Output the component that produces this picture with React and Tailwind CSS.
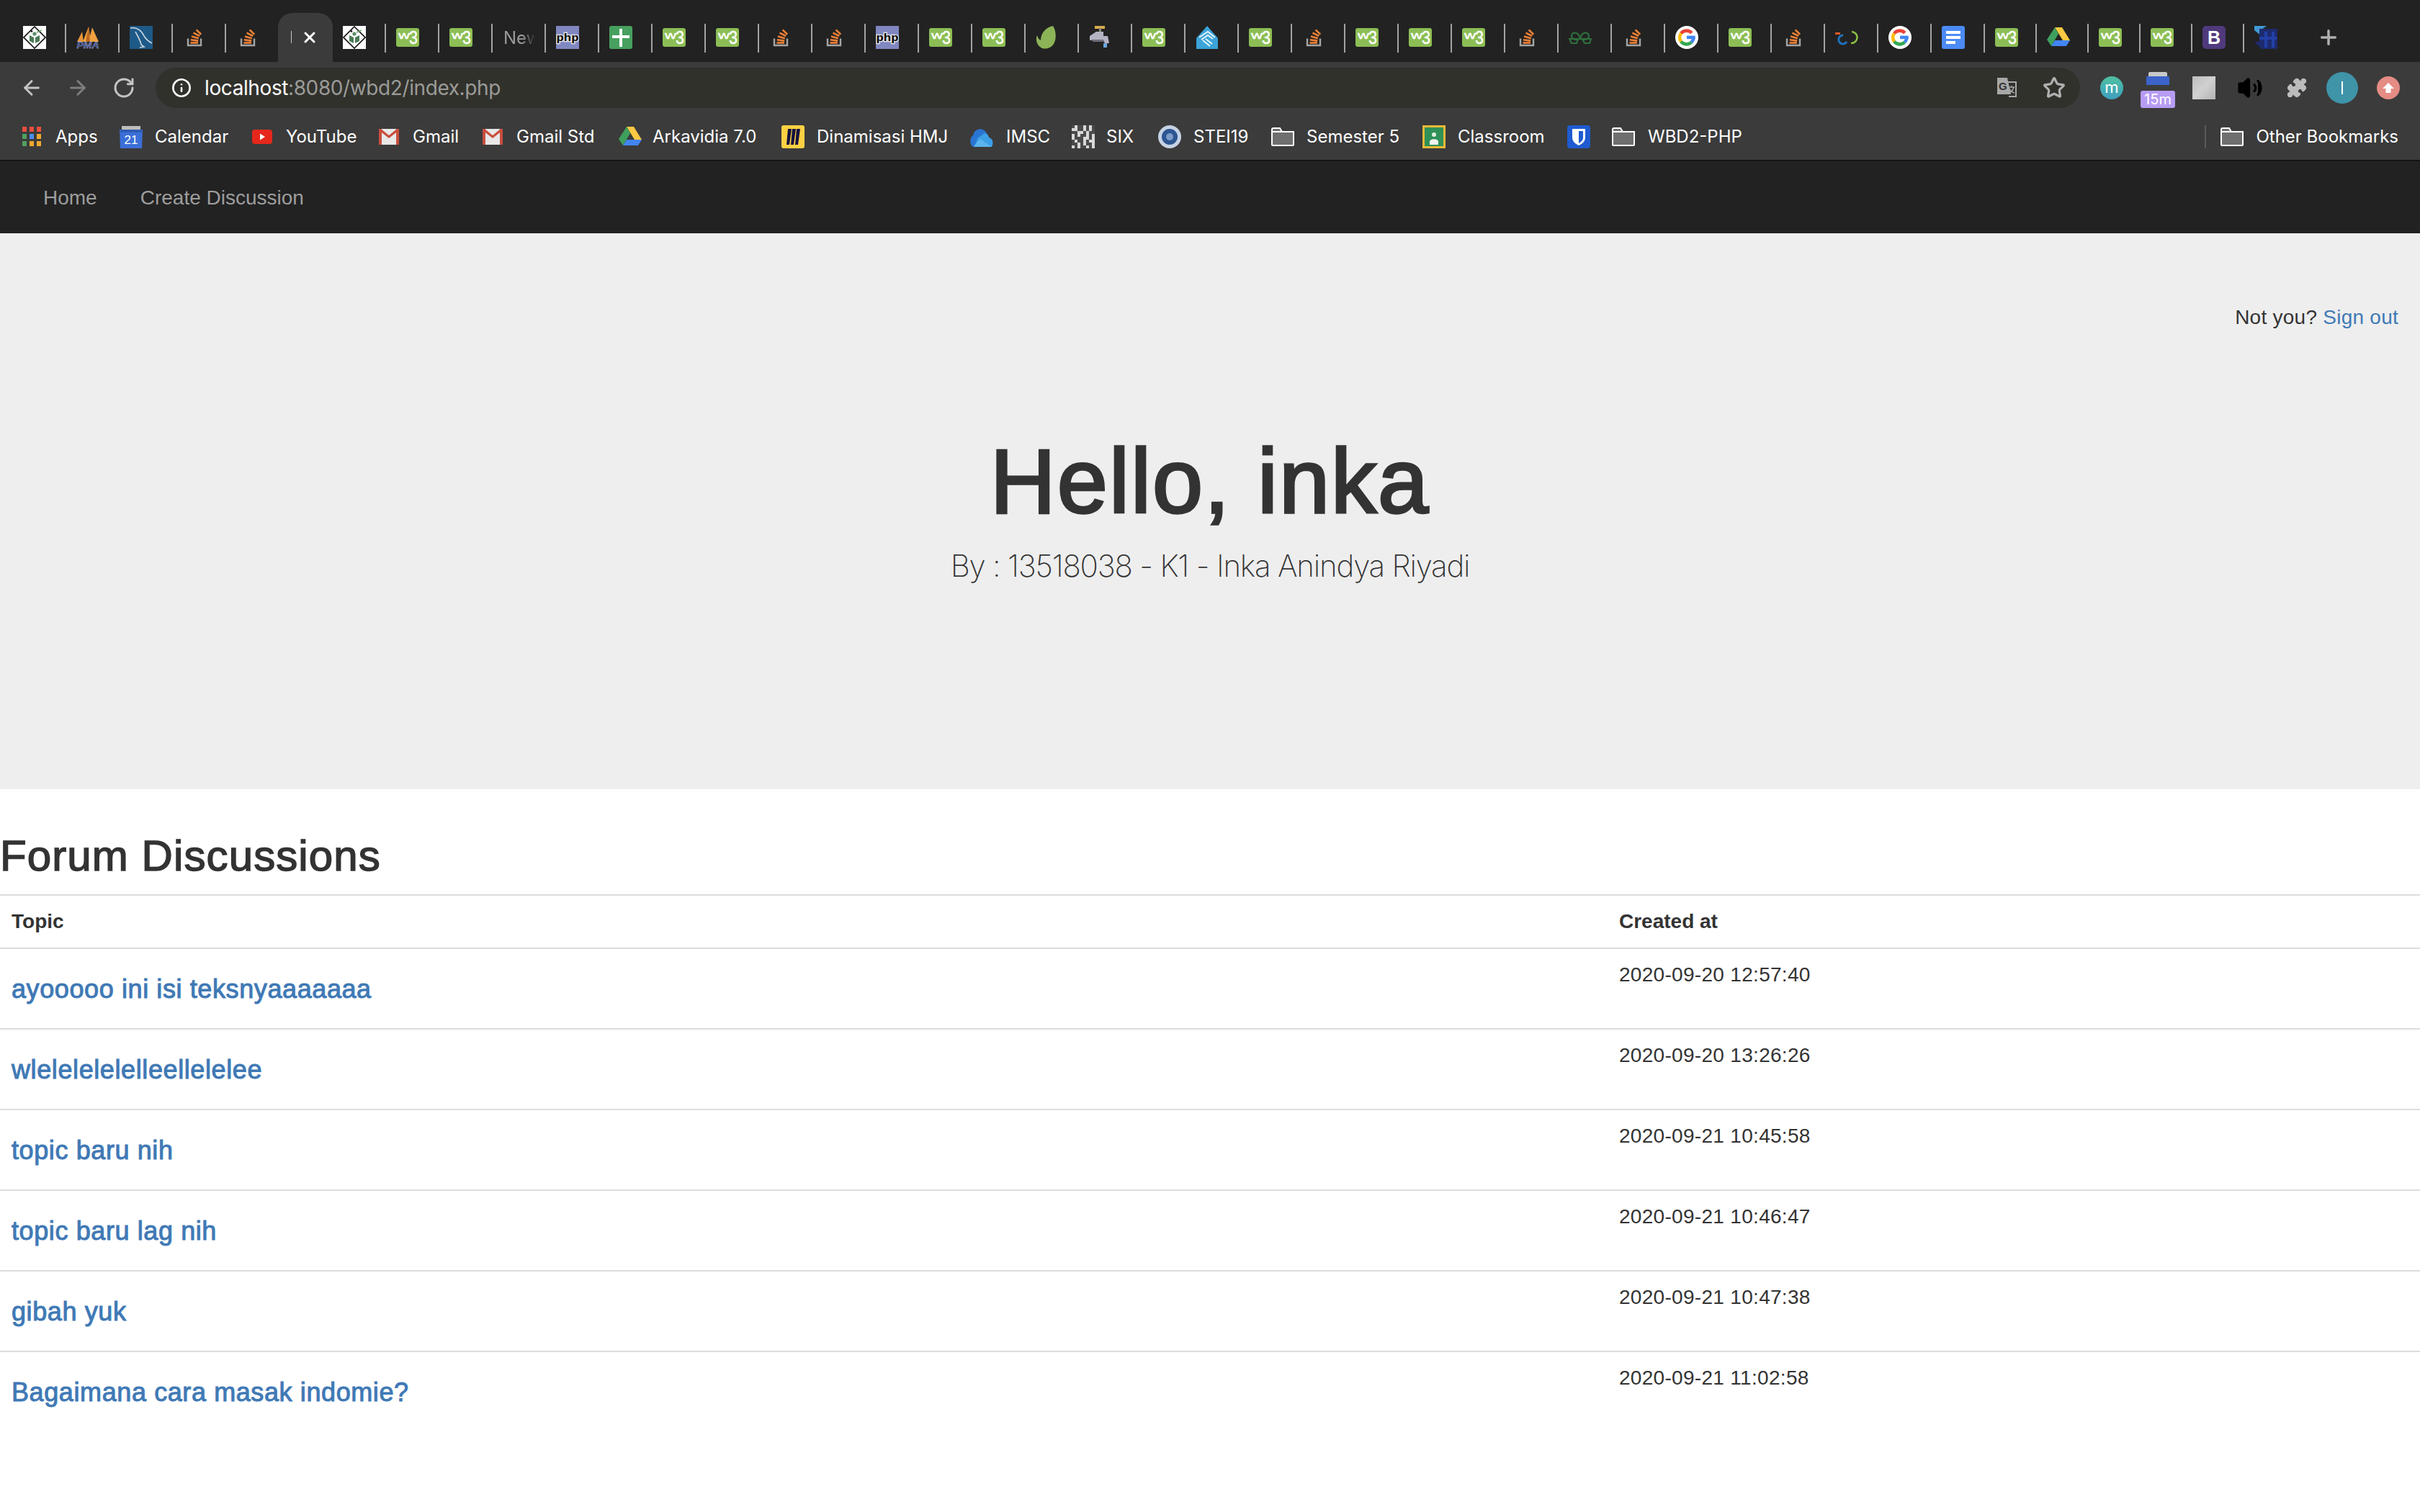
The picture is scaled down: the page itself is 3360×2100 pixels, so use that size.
import React from 'react';
import { ArrowLeft, ArrowRight, RotateCw, Info, Star, Puzzle, Volume2, Plus, X } from 'lucide-react';

const Svg = ({ children, className = '' }) => (
  <svg viewBox="0 0 32 32" className={`w-8 h-8 shrink-0 ${className}`}>{children}</svg>
);

const Stei = () => (
  <Svg>
    <rect width="32" height="32" fill="#fff" />
    <path d="M16 1 L31 16 L16 31 L1 16 Z" fill="#fff" stroke="#111" strokeWidth="1.6" />
    <path d="M9 13 L15 16 L15 24 L9 21 Z M23 13 L17 16 L17 24 L23 21 Z" fill="#4b7a55" />
    <circle cx="16" cy="11" r="2.6" fill="#5c8f66" />
    <circle cx="12" cy="7.5" r="1.3" fill="#111" />
    <path d="M19 9 L26 6" stroke="#6da06f" strokeWidth="1.4" />
  </Svg>
);

const Pma = () => (
  <Svg>
    <path d="M1 22 L8 8 L10 22 Z" fill="#e8953a" />
    <path d="M9 22 L17 1 L19 14 L22 2 L31 22 Z" fill="#f0a040" />
    <path d="M17 1 L19 22 L13 22 Z" fill="#b9691f" />
    <text x="16" y="31" textAnchor="middle" fontFamily="Liberation Sans" fontStyle="italic" fontWeight="700" fontSize="12" fill="#3a4a8c" stroke="#c8cde8" strokeWidth="0.3" textLength="31" lengthAdjust="spacingAndGlyphs">PMA</text>
  </Svg>
);

const Mysql = () => (
  <Svg>
    <rect width="32" height="32" fill="#1e5a88" />
    <path d="M1 3 C 10 1 17 7 20 14 C 23 19 27 22 31 24" fill="none" stroke="#c7d3dd" strokeWidth="1.6" />
    <path d="M8 8 C 11 14 15 20 16 26 L20 29 L14 30" fill="none" stroke="#c7d3dd" strokeWidth="1.6" />
  </Svg>
);

const So = () => (
  <Svg>
    <path d="M7 17.5 V27 H25 V17.5" fill="none" stroke="#a5a5a5" strokeWidth="2.4" />
    <g stroke="#ef8236" strokeWidth="2.6">
      <path d="M10.5 23.5 H21" />
      <path d="M10.8 19.2 L21.2 20.6" />
      <path d="M12 14.6 L21.8 17.2" />
      <path d="M14.5 9.6 L23.2 14" />
      <path d="M18.6 5.4 L25.2 11.8" />
    </g>
  </Svg>
);

const W3 = () => (
  <Svg>
    <rect y="3" width="32" height="26" rx="3" fill="#8cbe55" />
    <text x="3" y="18" fontFamily="Liberation Sans" fontSize="15" fill="#fff" stroke="#fff" strokeWidth="0.4" textLength="16" lengthAdjust="spacingAndGlyphs">w</text>
    <text x="18" y="25" fontFamily="Liberation Sans" fontSize="25" fill="#fff" stroke="#fff" strokeWidth="0.4" textLength="12" lengthAdjust="spacingAndGlyphs">3</text>
  </Svg>
);

const Php = () => (
  <Svg>
    <rect width="32" height="32" fill="#8087c0" />
    <text x="16" y="21" textAnchor="middle" fontFamily="Liberation Mono" fontWeight="700" fontSize="15" fill="#000" stroke="#e8e8e8" strokeWidth="2.4" paintOrder="stroke" textLength="31" lengthAdjust="spacingAndGlyphs">php</text>
  </Svg>
);

const GreenPlus = () => (
  <Svg>
    <rect width="32" height="32" rx="3" fill="#47a05e" />
    <path d="M14 4 H18 V13 H28 V17 H18 V29 H14 V17 H4 V13 H14 Z" fill="#fff" />
  </Svg>
);

const Leaf = () => (
  <Svg>
    <path d="M24 0 C 28 6 29 16 26 23 C 23 30 15 33 9 31 C 2 28 -1 19 2 13 C 3 17 5 19 7 20 C 7 10 14 2 24 0 Z" fill="#8cb356" />
  </Svg>
);

const Faucet = () => (
  <Svg>
    <rect x="8" y="0" width="14" height="4" fill="#d9ad4c" />
    <rect x="14" y="3" width="3" height="6" fill="#888" />
    <path d="M1 14 L10 8 H20 L20 14 H26 L28 24 H22 L20 20 H8 L1 20 Z" fill="#b3b3c2" />
    <path d="M2 19 H20 L21 22 H6 Z" fill="#6f6d7a" />
    <rect x="20" y="24" width="5" height="6" fill="#6ba4e0" />
  </Svg>
);

const Drop = () => (
  <Svg>
    <path d="M16 0 L31 17 V32 H1 V17 Z" fill="#3ba3d8" />
    <path d="M5 16 L17 8 L27 16 M8 19 L17 13 L24 18 M14 18 L23 25 M10 20 L20 28" fill="none" stroke="#e8f4fa" strokeWidth="2" />
  </Svg>
);

const Glasses = () => (
  <Svg>
    <g fill="none" stroke="#2f6e3d" strokeWidth="2.2">
      <path d="M1 18 H13 L11 24 H4 Z" />
      <path d="M19 18 H31 L29 24 H22 Z" />
      <path d="M13 18 H19" />
      <path d="M4 14 C 4 8 13 8 15 15 C 17 21 28 20 28 14" />
      <path d="M28 14 C 28 8 19 8 17 15 C 15 21 4 20 4 14" />
    </g>
  </Svg>
);

const Google = () => (
  <Svg>
    <circle cx="16" cy="16" r="16" fill="#fff" />
    <g fill="none" strokeWidth="4.6">
      <path d="M22.8 9.8 A 9.6 9.6 0 0 0 8 10.4" stroke="#ea4335" />
      <path d="M8 10.4 A 9.6 9.6 0 0 0 8 21.6" stroke="#fbbc05" />
      <path d="M8 21.6 A 9.6 9.6 0 0 0 22.4 22.6" stroke="#34a853" />
      <path d="M22.4 22.6 A 9.6 9.6 0 0 0 25.4 16" stroke="#4285f4" />
    </g>
    <rect x="16" y="13.6" width="11.6" height="4.6" fill="#4285f4" />
  </Svg>
);

const Swirl = () => (
  <Svg>
    <path d="M16 8 A 8 8 0 1 1 15 24" fill="none" stroke="#8cbe45" strokeWidth="2.6" transform="translate(7 0)" />
    <path d="M10 13 A 6 6 0 1 0 15 22" fill="none" stroke="#1e73be" strokeWidth="3" transform="translate(1 0)" />
    <rect x="0" y="9" width="7" height="3" fill="#e2582a" />
  </Svg>
);

const Docs = () => (
  <Svg>
    <rect width="32" height="32" rx="3" fill="#4c8bf5" />
    <rect x="6" y="7" width="20" height="4" fill="#fff" />
    <rect x="6" y="14" width="20" height="4" fill="#fff" />
    <rect x="6" y="21" width="13" height="4" fill="#fff" />
  </Svg>
);

const Drive = () => (
  <Svg>
    <path d="M11 2 H21 L32 20 H22 Z" fill="#fbc942" />
    <path d="M11 2 L16 11 L6 28 L0 19 Z" fill="#3ea05c" />
    <path d="M11 20 H32 L27 28 H6 Z" fill="#4285f4" />
  </Svg>
);

const Boot = () => (
  <Svg>
    <rect width="32" height="32" rx="5" fill="#4f3a7d" />
    <text x="16" y="25" textAnchor="middle" fontFamily="Liberation Sans" fontWeight="700" fontSize="25" fill="#fff">B</text>
  </Svg>
);

const BlueTab = () => (
  <Svg>
    <path d="M0 0 H17 L10 5 V14 L0 6 Z" fill="#3f9ad6" />
    <path d="M7 4 H32 V32 H10 L0 22 H7 Z" fill="#1d2b6e" />
    <path d="M14 8 H18 V30 H14 Z M24 8 H28 V30 H24 Z M7 15 H31 V19 H7 Z" fill="#2340a8" />
  </Svg>
);

const Apps = () => (
  <svg viewBox="0 0 26 28" className="w-[26px] h-7 shrink-0">
    {['#ea4e3d', '#ea4e3d', '#ea4e3d', '#4fa05e', '#4a8df0', '#eea92f', '#4fa05e', '#eea92f', '#eea92f'].map((c, i) => (
      <rect key={i} x={(i % 3) * 10} y={Math.floor(i / 3) * 10} width="6" height="7" fill={c} />
    ))}
  </svg>
);

const Calendar = () => (
  <Svg>
    <path d="M3 1 H29 V6 H3 Z" fill="#bdbdbd" />
    <path d="M0 6 H32 L31 32 H1 Z" fill="#3b6fd8" />
    <path d="M1 6 H31 V10 H1 Z" fill="#2f5cb8" />
    <text x="16" y="26" textAnchor="middle" fontFamily="Liberation Sans" fontSize="17" fill="#fff">21</text>
  </Svg>
);

const YouTube = () => (
  <svg viewBox="0 0 28 20" className="w-7 h-5 shrink-0">
    <rect width="28" height="20" rx="4" fill="#e5271c" />
    <path d="M11 5.5 L18 10 L11 14.5 Z" fill="#fff" />
  </svg>
);

const Gmail = () => (
  <svg viewBox="0 0 28 22" className="w-7 h-[22px] shrink-0">
    <rect width="28" height="22" rx="1.5" fill="#e8e8e8" />
    <path d="M0 2 L14 13 L28 2 V0 H25 L14 9 L3 0 H0 Z" fill="#c94e3f" />
    <rect width="4" height="22" fill="#c94e3f" />
    <rect x="24" width="4" height="22" fill="#c94e3f" />
  </svg>
);

const Miro = () => (
  <Svg>
    <rect width="32" height="32" rx="3" fill="#fed143" />
    <path d="M9 5 L14 5 L11 27 L7 27 Z M15 5 L20 5 L17 27 L13 27 Z M21 5 L26 5 L23 27 L19 27 Z" fill="#14123f" />
  </Svg>
);

const OneDrive = () => (
  <Svg>
    <path d="M4 14 C 6 4 18 2 23 11 L11 30 H5 C 0 30 -2 18 4 14 Z" fill="#2a75d2" />
    <path d="M10 18 L20 11 C 24 11 26 15 26 17 C 31 18 33 24 30 30 H7 Z" fill="#3d9fe6" />
    <path d="M5 30 C 8 24 11 21 14 19 L30 30 Z" fill="#5bb4ef" />
  </Svg>
);

const Six = () => {
  const cells = '1011010100110101110010110101101001110010101101001101011001011010'.split('');
  return (
    <Svg>
      {cells.map((c, i) => (
        <rect key={i} x={(i % 8) * 4} y={Math.floor(i / 8) * 4} width="4" height="4" fill={c === '1' ? '#4a4a4a' : '#d8d8d8'} />
      ))}
    </Svg>
  );
};

const Seal = () => (
  <Svg>
    <ellipse cx="16" cy="16" rx="16" ry="16" fill="#c6d2e4" />
    <ellipse cx="16" cy="16" rx="11" ry="11" fill="#2d5592" />
    <circle cx="16" cy="16" r="5" fill="#7f9cc9" />
  </Svg>
);

const Folder = () => (
  <svg viewBox="0 0 32 26" className="w-8 h-[26px] shrink-0">
    <path d="M1 3 C 1 2 2 1 3 1 H12 L15 6 H31 V24 C 31 24.5 30.5 25 30 25 H2 C 1.5 25 1 24.5 1 24 Z" fill="#6f6f6f" stroke="#fff" strokeWidth="2" />
    <path d="M1 6 H15" stroke="#fff" strokeWidth="2" />
  </svg>
);

const Classroom = () => (
  <Svg>
    <rect width="32" height="32" fill="#efb93a" />
    <rect x="3" y="3" width="26" height="26" fill="#2f9157" />
    <circle cx="16" cy="13" r="3" fill="#dfeee3" />
    <path d="M10 23 C 10 18 22 18 22 23 V27 H10 Z" fill="#f0f0f0" />
  </Svg>
);

const Bitwarden = () => (
  <Svg>
    <rect width="32" height="32" rx="4" fill="#1f5bd0" />
    <path d="M7 5 H25 V17 C 25 23 20 26 16 28 C 12 26 7 23 7 17 Z" fill="#fff" />
    <path d="M16 8 H22 V17 C 22 21 19 23 16 25 Z" fill="#1f5bd0" />
  </Svg>
);

const Translate = () => (
  <svg viewBox="0 0 28 30" className="w-7 h-[30px] shrink-0">
    <path d="M9 7 H27 V27 H17" fill="none" stroke="#a8a8a8" strokeWidth="2" />
    <path d="M1 1 H15 L20 24 H1 Z" fill="#a8a8a8" />
    <text x="3" y="18" fontFamily="Liberation Sans" fontWeight="700" fontSize="15" fill="#333">G</text>
    <path d="M17 14 H25 M21 12 V14 M24 14 C 23 18 20 21 17 22 M18 16 C 19 19 21 21 25 22" fill="none" stroke="#a8a8a8" strokeWidth="1.5" />
  </svg>
);

const tabs = [
  Stei, Pma, Mysql, So, So, 'active', Stei, W3, W3, 'new', Php, GreenPlus, W3, W3, So, So, Php, W3, W3, Leaf,
  Faucet, W3, Drop, W3, So, W3, W3, W3, So, Glasses, So, Google, W3, So, Swirl, Google, Docs,
];
const narrowTabs = [W3, Drive, W3, W3, Boot];

function TabStrip() {
  return (
    <div className="flex h-[86px] bg-[#222222] pl-[18px] pt-[33px] items-start">
      {tabs.map((T, i) => {
        if (T === 'active') {
          return (
            <div key={i} className="relative w-[74px] h-10 shrink-0">
              <div className="absolute -left-[2px] -right-0 -top-[15px] h-[68px] bg-[#3b3b3b] rounded-t-[20px]" />
              <div className="absolute left-[16px] top-[10px] w-[1px] h-[17px] bg-[#c8c8c8]" />
              <X size={24} strokeWidth={3} className="absolute left-[30px] top-[7px] text-white" />
            </div>
          );
        }
        if (T === 'new') {
          return (
            <div key={i} className="w-[74px] h-10 shrink-0 pl-[15px] border-r-2 border-[#a3a3a3]">
              <div className="w-[44px] h-10 overflow-hidden text-[24px] leading-10 text-[#9a9a9a] [font-family:Inter,sans-serif] [mask-image:linear-gradient(to_right,black_60%,transparent)]">New</div>
            </div>
          );
        }
        return (
          <div key={i} className={`w-[74px] h-10 shrink-0 pl-[14px] pt-[3px] border-r-2 ${i === 4 ? 'border-transparent' : 'border-[#a3a3a3]'}`}>
            <T />
          </div>
        );
      })}
      {narrowTabs.map((T, i) => (
        <div key={i} className="w-[72px] h-10 shrink-0 pl-[14px] pt-[3px] border-r-2 border-[#a3a3a3]">
          <T />
        </div>
      ))}
      <div className="w-[72px] h-10 shrink-0 pl-[14px] pt-[3px]">
        <BlueTab />
      </div>
      <Plus size={32} strokeWidth={2.6} className="ml-[29px] mt-[3px] text-[#b0b0b0] shrink-0" />
    </div>
  );
}

function Toolbar() {
  return (
    <div className="flex items-center h-[72px] bg-[#3b3b3b] pl-[28px]">
      <ArrowLeft size={32} strokeWidth={2.2} className="text-[#c4c4c4] shrink-0" />
      <ArrowRight size={32} strokeWidth={2.2} className="ml-[32px] text-[#7e7e7e] shrink-0" />
      <RotateCw size={32} strokeWidth={2.2} className="ml-[32px] text-[#c4c4c4] shrink-0" />
      <div className="ml-[28px] flex items-center w-[2672px] h-14 rounded-full bg-[#31312c] pl-[22px] pr-[20px] shrink-0">
        <Info size={28} strokeWidth={2.2} className="text-white shrink-0" />
        <div className="ml-[18px] text-[28px] tracking-[-0.4px] [font-family:Inter,sans-serif] text-white">
          localhost<span className="text-[#9b9b98]">:8080/wbd2/index.php</span>
        </div>
        <div className="ml-auto flex items-center gap-[36px]">
          <Translate />
          <Star size={32} strokeWidth={2.4} className="text-[#b0b0b0]" />
        </div>
      </div>
      <div className="ml-[28px] w-8 h-8 rounded-full bg-gradient-to-b from-[#4fbf9f] to-[#3f9fc0] flex items-center justify-center text-white text-[22px] leading-none [font-family:Inter,sans-serif] pb-[3px] shrink-0">m</div>
      <div className="relative ml-[24px] w-[48px] h-14 shrink-0">
        <div className="absolute left-[11px] top-[6px] w-[26px] h-[6px] bg-[#c8c8c8] rounded-t-[2px]" />
        <div className="absolute left-[8px] top-[12px] w-8 h-[12px] bg-[#3b63c9]" />
        <div className="absolute left-0 bottom-0 w-[48px] h-6 bg-[#b79cf5] rounded-[3px] text-white text-[20px] leading-6 text-center [font-family:Inter,sans-serif]">15m</div>
      </div>
      <div className="ml-[24px] w-8 h-8 bg-gradient-to-br from-[#bdbdbd] via-[#d0d0d0] to-[#b4b4b4] shrink-0" />
      <Volume2 size={36} strokeWidth={2.2} className="ml-[30px] text-black fill-black shrink-0" />
      <Puzzle size={30} strokeWidth={1} className="ml-[32px] text-[#bcbcbc] fill-[#bcbcbc] shrink-0" />
      <div className="ml-[26px] w-11 h-11 rounded-full bg-[#3f94a8] flex items-center justify-center shrink-0">
        <div className="w-[2px] h-[18px] bg-white" />
      </div>
      <div className="ml-[26px] w-8 h-8 rounded-full bg-[#e58c84] flex items-center justify-center shrink-0">
        <svg viewBox="0 0 16 16" className="w-4 h-4"><path d="M8 1 L16 9 H11.5 V15 H4.5 V9 H0 Z" fill="#fff" /></svg>
      </div>
    </div>
  );
}

const bookmarks = [
  ['Apps', Apps, 'w-[135px] gap-[20px]'],
  ['Calendar', Calendar, 'w-[184px] gap-[17px]'],
  ['YouTube', YouTube, 'w-[176px] gap-[19px]'],
  ['Gmail', Gmail, 'w-[144px] gap-[19px]'],
  ['Gmail Std', Gmail, 'w-[189px] gap-[19px]'],
  ['Arkavidia 7.0', Drive, 'w-[226px] gap-[15px]'],
  ['Dinamisasi HMJ', Miro, 'w-[262px] gap-[17px]'],
  ['IMSC', OneDrive, 'w-[141px] gap-[18px]'],
  ['SIX', Six, 'w-[120px] gap-[16px]'],
  ['STEI19', Seal, 'w-[157px] gap-[17px]'],
  ['Semester 5', Folder, 'w-[210px] gap-[17px]'],
  ['Classroom', Classroom, 'w-[201px] gap-[17px]'],
  ['', Bitwarden, 'w-[62px]'],
  ['WBD2-PHP', Folder, 'gap-[18px]'],
];

function Bookmarks() {
  return (
    <div className="flex items-center h-[64px] bg-[#3b3b3b] pl-[31px] pr-[30px] text-white text-[24px] [font-family:Inter,sans-serif] border-b-2 border-[#151515] box-content">
      <div className="flex items-center">
        {bookmarks.map(([name, Icon, cls], i) => (
          <div key={i} className={`flex items-center shrink-0 ${cls}`}>
            <Icon />
            {name && <span>{name}</span>}
          </div>
        ))}
      </div>
      <div className="ml-auto w-[2px] h-8 bg-[#5a5a5a]" />
      <div className="ml-5 flex items-center gap-[17px]">
        <Folder />
        <span>Other Bookmarks</span>
      </div>
    </div>
  );
}

const rows = [
  ['ayooooo ini isi teksnyaaaaaaa', '2020-09-20 12:57:40'],
  ['wlelelelelelleellelelee', '2020-09-20 13:26:26'],
  ['topic baru nih', '2020-09-21 10:45:58'],
  ['topic baru lag nih', '2020-09-21 10:46:47'],
  ['gibah yuk', '2020-09-21 10:47:38'],
  ['Bagaimana cara masak indomie?', '2020-09-21 11:02:58'],
];

export default function App() {
  return (
    <div className="w-[3360px] h-[2100px] overflow-hidden bg-white text-[#333333] text-[28px] leading-10 [font-family:'Liberation_Sans',Arial,sans-serif]">
      <TabStrip />
      <Toolbar />
      <Bookmarks />
      <nav className="flex h-[100px] bg-[#222222] text-[#9d9d9d]">
        <a className="px-[30px] ml-[30px] leading-[102px]">Home</a>
        <a className="px-[30px] leading-[102px]">Create Discussion</a>
      </nav>
      <section className="h-[772px] bg-[#eeeeee] pt-[97px] px-[30px]">
        <p className="text-right tracking-[0.25px]">
          Not you? <a className="text-[#3f79b5]">Sign out</a>
        </p>
        <h1 className="mt-[139px] text-center text-[126px] leading-[138px] font-normal tracking-[2px] [-webkit-text-stroke:3.5px_#333333]">Hello, inka</h1>
        <p className="mt-[18px] text-center text-[42px] leading-[60px] font-extralight tracking-[-1.2px] [font-family:Inter,sans-serif]">By : 13518038 - K1 - Inka Anindya Riyadi</p>
      </section>
      <h2 className="mt-[60px] mb-5 text-[60px] leading-[66px] tracking-[1.1px] [-webkit-text-stroke:1.5px_#333333]">Forum Discussions</h2>
      <table className="w-full border-collapse">
        <thead>
          <tr>
            <th className="w-[2232px] p-4 text-left font-bold border-t-2 border-[#dddddd]">Topic</th>
            <th className="p-4 text-left font-bold border-t-2 border-[#dddddd]">Created at</th>
          </tr>
        </thead>
        <tbody>
          {rows.map(([topic, date]) => (
            <tr key={date}>
              <td className="p-4 align-top border-t-2 border-[#dddddd]">
                <h4 className="mt-5 mb-[18px] text-[36px] leading-10 tracking-[0.6px] text-[#3f79b5] [-webkit-text-stroke:1px_#3f79b5]">{topic}</h4>
              </td>
              <td className="p-4 align-top tracking-[0.3px] border-t-2 border-[#dddddd]">{date}</td>
            </tr>
          ))}
        </tbody>
      </table>
    </div>
  );
}
